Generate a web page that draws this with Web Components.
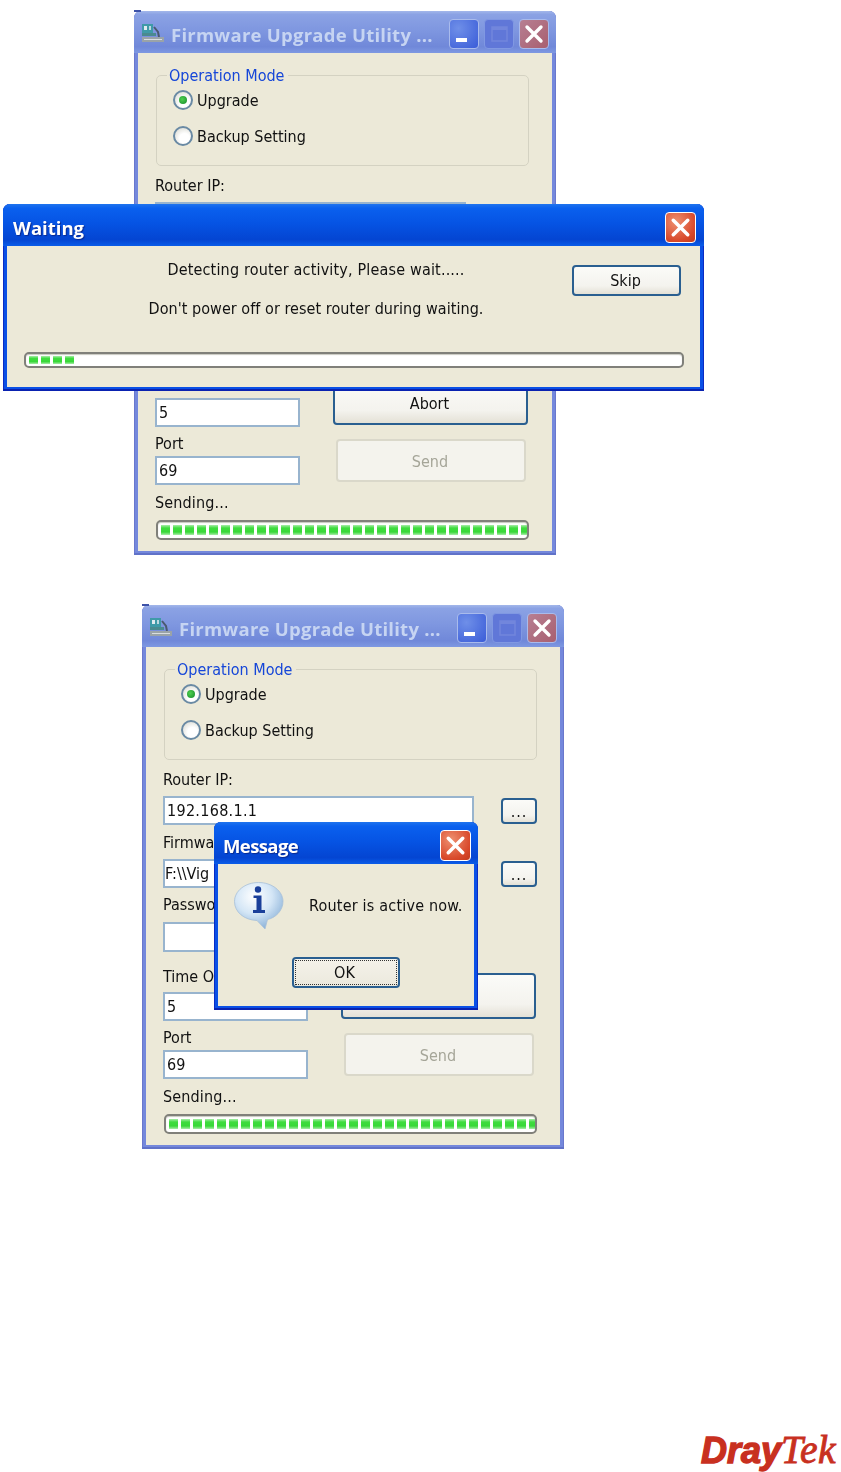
<!DOCTYPE html>
<html>
<head>
<meta charset="utf-8">
<title>Firmware Upgrade Utility</title>
<style>
    html, body { margin: 0; padding: 0; background: #fff; }
    body { font-family: "DejaVu Sans", "Noto Sans", sans-serif; font-stretch: condensed; color: #111; }
</style>
</head>
<body>
<fw-page>
    <xp-window slot="desk" heading="Firmware Upgrade Utility ..." controls="all" style="left:134px;top:11px;width:422px;height:544px;z-index:1">
        <app-glyph slot="icon"></app-glyph>
        <fw-form>
            <span slot="abort">Abort</span>
            <span slot="timeout-value">5</span>
            <span slot="port-label">Port</span>
            <span slot="port-value">69</span>
            <span slot="router-label">Router IP:</span>
        </fw-form>
    </xp-window>

    <xp-window slot="desk" active heading="Waiting" style="left:3px;top:204px;width:701px;height:187px;z-index:2;--pad:8px;--name-left:3px">
        <waiting-body></waiting-body>
    </xp-window>

    <xp-window slot="desk" heading="Firmware Upgrade Utility ..." controls="all" style="left:142px;top:605px;width:422px;height:544px;z-index:1">
        <app-glyph slot="icon"></app-glyph>
        <fw-form>
            <span slot="router-label">Router IP:</span>
            <span slot="router-value" style="letter-spacing:.3px">192.168.1.1</span>
            <span slot="firmware-label">Firmwa</span>
            <span slot="firmware-value" style="margin-left:-2px">F:\\Vig</span>
            <span slot="password-label">Passwo</span>
            <span slot="timeout-label">Time O</span>
            <span slot="timeout-value">5</span>
            <span slot="port-label">Port</span>
            <span slot="port-value">69</span>
        </fw-form>
    </xp-window>

    <xp-window slot="desk" active heading="Message" style="left:214px;top:822px;width:264px;height:188px;z-index:2;--spacing:-0.6px">
        <message-body></message-body>
    </xp-window>

    <dray-logo slot="footer"></dray-logo>
</fw-page>

<script>
class FwPage extends HTMLElement {
    constructor() {
        super();
        this.attachShadow({ mode: "open" }).innerHTML = /*html*/`
            <style>
                :host { display: block; width: 841px; height: 1472px; overflow: hidden; }
                .desk { position: relative; height: 1428px; }
                .footer { display: flex; justify-content: flex-end; padding-right: 5px; }
            </style>
            <div class="desk"><slot name="desk"></slot></div>
            <div class="footer"><slot name="footer"></slot></div>
        `;
    }
}

class XpWindow extends HTMLElement {
    constructor() {
        super();
        this.attachShadow({ mode: "open" });
    }

    style_ = /*css*/`
        :host {
            display: block;
            position: absolute;
            box-sizing: border-box;
            filter: blur(0.4px);
            --edge: #7488dc;
            --edge-out: #6a78cc;
            --edge-low: #6072c8;
            --title: linear-gradient(#a3b7ea 0, #8ba2e4 8%, #7f97e0 45%, #7088d9 85%, #7e98e2 100%);
            --title-text: #c6d4f2;
            --shadow: none;
            --spacing: 0.25px;
        }
        :host([active]) {
            --edge: #0a50e6;
            --edge-out: #0a2cc4;
            --edge-low: #0a22b0;
            --title: linear-gradient(#1f74ee 0, #0a60ee 10%, #0654e4 45%, #0445d2 85%, #0a5ce8 100%);
            --title-text: #fff;
            --shadow: 1px 1px 1px #0a2a90;
            --spacing: 0;
        }
        :host(:not([active]))::before {
            content: "";
            position: absolute;
            left: 0;
            top: -1px;
            width: 7px;
            height: 2px;
            background: #3d52a8;
        }
        .frame {
            display: flex;
            flex-direction: column;
            height: 100%;
            box-sizing: border-box;
            border-radius: 7px 7px 0 0;
            border-bottom: 2px solid var(--edge-low);
            overflow: hidden;
            background: var(--edge);
            box-shadow: inset 1px 0 var(--edge-out), inset -1px 0 var(--edge-out);
        }
        .bar {
            display: flex;
            align-items: center;
            flex: 0 0 42px;
            padding: 4px var(--pad, 7px) 0 7px;
            box-sizing: border-box;
            background: var(--title);
        }
        .name {
            flex: 1;
            min-width: 0;
            padding-left: var(--name-left, 2px);
            font-family: "Open Sans", "DejaVu Sans", sans-serif;
            font-stretch: normal;
            font-weight: 700;
            font-size: 18.5px;
            letter-spacing: var(--spacing);
            white-space: nowrap;
            color: var(--title-text);
            text-shadow: var(--shadow);
        }
        ::slotted([slot="icon"]) { margin-right: 4px; }
        .ctl {
            flex: 0 0 30px;
            height: 30px;
            margin-left: 5px;
            box-sizing: border-box;
            border: 1px solid #a9bbec;
            border-radius: 4px;
            display: block;
        }
        .ctl svg { display: block; width: 100%; height: 100%; }
        .min { background: radial-gradient(circle at 30% 30%, #6f8fe8, #3a5cd8); }
        .max { background: #6077d8; border-color: #8098e2; }
        .close { background: linear-gradient(135deg, #b77f92, #a85f70); }
        :host([active]) .close {
            flex-basis: 31px;
            height: 31px;
            background: radial-gradient(circle at 35% 30%, #ee9070, #d8482a 70%, #c23a1c);
            border-color: #fff;
        }
        .body {
            flex: 1;
            margin: 0 4px 2px;
            background: #ece9d8;
            min-height: 0;
        }
    `;

    markup() {
        const all = this.getAttribute("controls") === "all";
        const xIcon = /*html*/`<svg viewBox="0 0 28 28"><path d="M7 7 L21 21 M21 7 L7 21" stroke="#fff" stroke-width="3.4" stroke-linecap="round"/></svg>`;
        const extras = all ? /*html*/`
            <span class="ctl min"><svg viewBox="0 0 28 28"><rect x="6" y="18" width="11" height="4" fill="#fff"/></svg></span>
            <span class="ctl max"><svg viewBox="0 0 28 28"><rect x="7" y="7" width="15" height="14" fill="none" stroke="#7286dc" stroke-width="1.5"/><rect x="7" y="7" width="15" height="3" fill="#7286dc"/></svg></span>
        ` : "";
        return /*html*/`
            <style>${this.style_}</style>
            <div class="frame" part="frame">
                <div class="bar">
                    <slot name="icon"></slot>
                    <span class="name">${this.getAttribute("heading")}</span>
                    ${extras}
                    <span class="ctl close">${xIcon}</span>
                </div>
                <div class="body"><slot></slot></div>
            </div>
        `;
    }

    connectedCallback() {
        this.shadowRoot.innerHTML = this.markup();
    }
}

class AppGlyph extends HTMLElement {
    constructor() {
        super();
        this.attachShadow({ mode: "open" }).innerHTML = /*html*/`
            <style>:host { display: block; width: 24px; height: 24px; flex: none; margin-top: -3px; }</style>
            <svg width="24" height="24" viewBox="0 0 24 24">
                <rect x="1" y="3" width="11" height="9" fill="#3f9aa8"/>
                <rect x="3" y="5" width="3" height="4" fill="#dfeaf0"/>
                <rect x="8" y="5" width="2" height="4" fill="#bcd8e0"/>
                <path d="M13 6 L17 11 L18 16" stroke="#4b5a70" stroke-width="2" fill="none"/>
                <rect x="1" y="12" width="14" height="3" fill="#4a8a90"/>
                <rect x="1" y="16" width="22" height="5" fill="#9aa3a8"/>
                <rect x="3" y="18" width="18" height="1" fill="#d8dde0"/>
            </svg>
        `;
    }
}

class XpField extends HTMLElement {
    constructor() {
        super();
        this.attachShadow({ mode: "open" }).innerHTML = /*html*/`
            <style>
                :host {
                    display: block;
                    box-sizing: border-box;
                    height: 29px;
                    padding: 0 2px;
                    line-height: 26px;
                    background: #fff;
                    border: 2px solid #98b4ce;
                    white-space: nowrap;
                    overflow: hidden;
                }
            </style>
            <slot></slot>
        `;
    }
}

class XpButton extends HTMLElement {
    constructor() {
        super();
        this.attachShadow({ mode: "open" }).innerHTML = /*html*/`
            <style>
                :host {
                    display: flex;
                    align-items: center;
                    justify-content: center;
                    box-sizing: border-box;
                    padding-top: 1px;
                    border: 2px solid #2a5f90;
                    border-radius: 4px;
                    background: linear-gradient(#fbfbf8, #f4f3ee 70%, #e4e1d6);
                    color: #111;
                    position: relative;
                }
                :host([disabled]) {
                    border-color: #dad8ca;
                    background: #f4f3ed;
                    color: #a5a598;
                }
                :host([focused]) { background: linear-gradient(#f4f2ea, #ece9dd); }
                :host([focused])::after {
                    content: "";
                    position: absolute;
                    inset: 1px;
                    border: 1px dotted #333;
                }
            </style>
            <slot></slot>
        `;
    }
}

class XpRadio extends HTMLElement {
    constructor() {
        super();
        this.attachShadow({ mode: "open" }).innerHTML = /*html*/`
            <style>
                :host { display: flex; align-items: center; height: 20px; }
                .dot {
                    flex: none;
                    box-sizing: border-box;
                    width: 20px;
                    height: 20px;
                    margin-right: 4px;
                    border-radius: 50%;
                    border: 2px solid #6a8aa4;
                    background: radial-gradient(circle at 60% 65%, #fff 35%, #d2d2c8);
                    display: flex;
                    align-items: center;
                    justify-content: center;
                }
                i {
                    display: none;
                    width: 8px;
                    height: 8px;
                    border-radius: 50%;
                    background: radial-gradient(circle at 40% 40%, #4fd04f, #16892a);
                }
                :host([checked]) i { display: block; }
                .txt { padding-top: 1px; }
            </style>
            <span class="dot"><i></i></span><span class="txt"><slot></slot></span>
        `;
    }
}

class XpProgress extends HTMLElement {
    constructor() {
        super();
        this.attachShadow({ mode: "open" });
    }

    connectedCallback() {
        const count = Number(this.getAttribute("blocks") || 0);
        this.shadowRoot.innerHTML = /*html*/`
            <style>
                :host {
                    display: flex;
                    box-sizing: border-box;
                    padding: 3px 3px;
                    gap: 3px;
                    background: #fff;
                    border: 2px solid #80807a;
                    border-radius: 5px;
                    overflow: hidden;
                    box-shadow: inset 0 1px 1px #c8c8c0;
                }
                b {
                    flex: 0 0 9px;
                    background: linear-gradient(#a8eca8, #3fdc3f 30%, #38d838 70%, #a8eca8);
                }
            </style>
            ${"<b></b>".repeat(count)}
        `;
    }
}

class FwForm extends HTMLElement {
    constructor() {
        super();
        this.attachShadow({ mode: "open" }).innerHTML = this.markup;
    }

    markup = /*html*/`
        <style>
            :host {
                display: block;
                padding: 14px 23px 11px 17px;
                font-size: 16px;
                line-height: 18px;
            }
            * { box-sizing: border-box; }
            fieldset {
                margin: 0 0 0 1px;
                padding: 7px 0 0 16px;
                height: 99px;
                border: 1.5px solid #d4d2c2;
                border-radius: 5px;
                display: flex;
                flex-direction: column;
                gap: 16px;
                min-width: 0;
            }
            legend { color: #1546d8; padding: 0 4px 0 2px; margin-left: -6px; height: 16px; line-height: 18px; }
            .lbl { height: 16px; white-space: nowrap; }
            .row { display: flex; gap: 27px; align-items: flex-start; }
            .row xp-field { width: 312px; }
            .dots { width: 36px; height: 26px; margin-top: 2px; letter-spacing: 1px; }
            .lower { display: grid; grid-template-columns: 145px 195px; column-gap: 33px; margin-top: 16px; }
            .send { height: 43px; width: 190px; margin: 14px 0 0 3px; padding: 3px 2px 0 0; }
            .abort { height: 46px; margin-top: 5px; padding: 3px 2px 0 0; }
            xp-progress { width: 373px; height: 20px; margin: 10px 0 0 1px; }
        </style>
        <fieldset>
            <legend>Operation Mode</legend>
            <xp-radio checked>Upgrade</xp-radio>
            <xp-radio>Backup Setting</xp-radio>
        </fieldset>
        <div class="lbl" style="margin-top:11px"><slot name="router-label"></slot></div>
        <div class="row" style="margin-top:9px">
            <xp-field><slot name="router-value"></slot></xp-field>
            <xp-button class="dots">...</xp-button>
        </div>
        <div class="lbl" style="margin-top:9px"><slot name="firmware-label"></slot></div>
        <div class="row" style="margin-top:9px">
            <xp-field><slot name="firmware-value"></slot></xp-field>
            <xp-button class="dots">...</xp-button>
        </div>
        <div class="lbl" style="margin-top:8px"><slot name="password-label"></slot></div>
        <div class="row" style="margin-top:10px"><xp-field style="height:30px"></xp-field></div>
        <div class="lower">
            <div>
                <div class="lbl"><slot name="timeout-label"></slot></div>
                <xp-field style="margin-top:8px"><slot name="timeout-value"></slot></xp-field>
                <div class="lbl" style="margin-top:8px"><slot name="port-label"></slot></div>
                <xp-field style="margin-top:5px"><slot name="port-value"></slot></xp-field>
            </div>
            <div>
                <xp-button class="abort"><slot name="abort"></slot></xp-button>
                <xp-button class="send" disabled>Send</xp-button>
            </div>
        </div>
        <div class="lbl" style="margin-top:9px;letter-spacing:.15px">Sending...</div>
        <xp-progress blocks="31"></xp-progress>
    `;
}

class WaitingBody extends HTMLElement {
    constructor() {
        super();
        this.attachShadow({ mode: "open" }).innerHTML = /*html*/`
            <style>
                :host { display: block; padding: 16px 0 0 17px; font-size: 16px; line-height: 16px; }
                .top { display: flex; align-items: flex-start; height: 90px; }
                .msg { width: 494px; margin-left: 45px; text-align: center; letter-spacing: 0.05px; }
                .msg div:first-child { letter-spacing: 0.17px; }
                .msg div + div { margin-top: 23px; }
                xp-button { width: 109px; height: 31px; margin: 3px 0 0 9px; padding-right: 2px; }
                xp-progress { width: 660px; height: 16px; padding: 2px 3px; border-radius: 5px; }
            </style>
            <div class="top">
                <div class="msg">
                    <div>Detecting router activity, Please wait.....</div>
                    <div>Don't power off or reset router during waiting.</div>
                </div>
                <xp-button>Skip</xp-button>
            </div>
            <xp-progress blocks="4"></xp-progress>
        `;
    }
}

class MessageBody extends HTMLElement {
    constructor() {
        super();
        this.attachShadow({ mode: "open" }).innerHTML = /*html*/`
            <style>
                :host { display: block; padding: 18px 0 0 16px; font-size: 16px; line-height: 16px; }
                .top { display: flex; align-items: flex-start; height: 75px; }
                .txt { margin: 16px 0 0 25px; white-space: nowrap; letter-spacing: 0.2px; }
                svg { flex: none; }
                .foot { display: flex; justify-content: center; padding-right: 16px; }
                xp-button { width: 108px; height: 31px; padding-right: 3px; }
            </style>
            <div class="top">
                <svg width="50" height="48" viewBox="0 0 50 48">
                    <defs>
                        <radialGradient id="bub" cx="0.4" cy="0.3" r="0.75">
                            <stop offset="0" stop-color="#ffffff"/>
                            <stop offset="0.5" stop-color="#d4e6f6"/>
                            <stop offset="1" stop-color="#86aed6"/>
                        </radialGradient>
                    </defs>
                    <path d="M24.5 0.5 C38 0.5 49 9 49 19.5 C49 29 41 36 33.5 37.5 L31 47 L23 38.5 C10 38 0.5 30 0.5 19.5 C0.5 9 11 0.5 24.5 0.5 Z" fill="url(#bub)" stroke="#a8c0d8" stroke-width="0.8"/>
                    <circle cx="24" cy="7.5" r="3.2" fill="#1a3f9a"/>
                    <path d="M19.5 13.5 H27.5 V28 H31 V31 H19 V28 H22.5 V16 H19.5 Z" fill="#1a3f9a"/>
                </svg>
                <div class="txt">Router is active now.</div>
            </div>
            <div class="foot"><xp-button focused>OK</xp-button></div>
        `;
    }
}

class DrayLogo extends HTMLElement {
    constructor() {
        super();
        this.attachShadow({ mode: "open" }).innerHTML = /*html*/`
            <style>
                :host { display: block; color: #c8301f; white-space: nowrap; line-height: 34px; height: 34px; margin-top: 5px; font-stretch: normal; }
                b { font: italic 700 36px/34px "Liberation Sans", sans-serif; -webkit-text-stroke: 1.4px #c8301f; }
                i { font: italic 400 39.5px/34px "Liberation Serif", serif; letter-spacing: 0.5px; -webkit-text-stroke: 0.9px #c8301f; }
            </style>
            <b>Dray</b><i>Tek</i>
        `;
    }
}

customElements.define("fw-page", FwPage);
customElements.define("xp-window", XpWindow);
customElements.define("app-glyph", AppGlyph);
customElements.define("xp-field", XpField);
customElements.define("xp-button", XpButton);
customElements.define("xp-radio", XpRadio);
customElements.define("xp-progress", XpProgress);
customElements.define("fw-form", FwForm);
customElements.define("waiting-body", WaitingBody);
customElements.define("message-body", MessageBody);
customElements.define("dray-logo", DrayLogo);
</script>
</body>
</html>
